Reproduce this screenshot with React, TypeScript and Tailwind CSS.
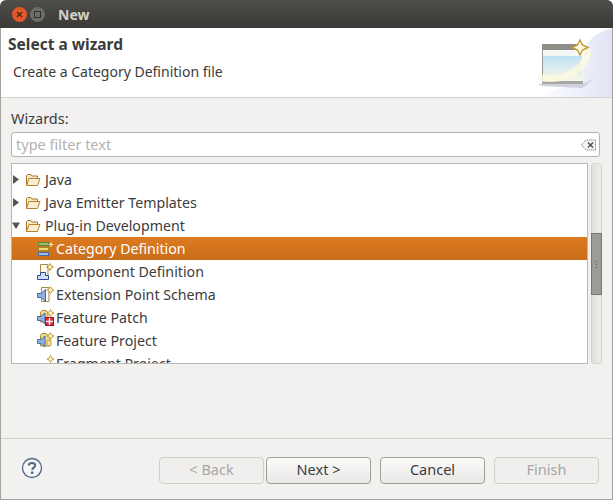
import React from 'react';

const fontStack = "font-['Noto_Sans','Open_Sans',sans-serif]";

// folder icon used for the tree categories
const FolderIcon = () => (
  <svg width="16" height="14" viewBox="0 0 16 14" className="shrink-0">
    <path d="M1.5 12.5V2.5L2.5 1.5H6L7 3H12.5V5" fill="#f6e7c4" stroke="#a9772c" strokeWidth="1" />
    <path d="M1.5 12.5L4 5.5H15L12.5 12.5Z" fill="#fbeed0" stroke="#b9822f" strokeWidth="1" strokeLinejoin="round" />
  </svg>
);

const Arrow = ({ open }: { open?: boolean }) => (
  <svg width="8" height="9" viewBox="0 0 8 9" className="shrink-0">
    {open ? <path d="M0 1.5H8L4 8Z" fill="#55534e" /> : <path d="M1 0L7 4.5L1 9Z" fill="#55534e" />}
  </svg>
);

const Sparkle = ({ x, y }: { x: number; y: number }) => (
  <path
    d={`M${x} ${y - 3.5}L${x + 1.2} ${y - 1.2}L${x + 3.5} ${y}L${x + 1.2} ${y + 1.2}L${x} ${y + 3.5}L${x - 1.2} ${y + 1.2}L${x - 3.5} ${y}L${x - 1.2} ${y - 1.2}Z`}
    fill="#fff6d0"
    stroke="#c19a35"
    strokeWidth="1"
  />
);

const CategoryIcon = () => (
  <svg width="18" height="16" viewBox="0 0 18 16" className="shrink-0">
    <rect x="1.5" y="1.5" width="10" height="3" fill="#9bbf6a" stroke="#5f7f3a" />
    <rect x="1.5" y="6.5" width="10" height="3" fill="#efd777" stroke="#a68a2c" />
    <rect x="1.5" y="11.5" width="10" height="3" fill="#9fbce4" stroke="#4a6aa5" />
    <path d="M14 1V6M11.5 3.5H16.5" stroke="#f4e6a8" strokeWidth="1.2" />
  </svg>
);

const ComponentIcon = () => (
  <svg width="18" height="18" viewBox="0 0 18 18" className="shrink-0">
    <path d="M3.5 1.5H11V15.5H3.5Z" fill="#fdfcf4" stroke="#a08a4a" />
    <path d="M0.5 16.5V12.5H3.5V9.5H8.5V12.5H11.5V16.5Z" fill="#d5def2" stroke="#2f4a9a" />
    <Sparkle x={13} y={4} />
  </svg>
);

const SchemaIcon = () => (
  <svg width="18" height="18" viewBox="0 0 18 18" className="shrink-0">
    <path d="M4.5 1.5H12V15.5H4.5Z" fill="#fdfcf4" stroke="#a08a4a" />
    <path d="M0.5 7.5L4 7.5L8.5 3.5V15.5L4 11.5H0.5Z" fill="#8fb0e0" stroke="#4a6aa5" />
    <Sparkle x={13.5} y={4} />
  </svg>
);

const PatchIcon = () => (
  <svg width="18" height="18" viewBox="0 0 18 18" className="shrink-0">
    <path d="M3.5 3.5L5 1.5H9L10 3H11V13H3.5Z" fill="#f1d98f" stroke="#a98a3a" />
    <path d="M0.5 7.5L4 7.5L8 4V15L4 11.5H0.5Z" fill="#8fb0e0" stroke="#4a6aa5" />
    <rect x="8.5" y="8.5" width="8" height="8" fill="#d8253a" stroke="#a01828" />
    <path d="M12.5 9V16M9 12.5H16" stroke="#fff" strokeWidth="1.4" />
    <Sparkle x={13.5} y={4} />
  </svg>
);

const ProjectIcon = () => (
  <svg width="18" height="18" viewBox="0 0 18 18" className="shrink-0">
    <path d="M3.5 3.5L5 1.5H9L10 3H13V14H3.5Z" fill="#f1d98f" stroke="#a98a3a" />
    <path d="M0.5 7.5L4 7.5L8 4V15L4 11.5H0.5Z" fill="#8fb0e0" stroke="#4a6aa5" />
    <path d="M10 8.5H14V13.5H10Z" fill="#f4e2a0" stroke="#c9a84a" />
    <Sparkle x={13.5} y={4} />
  </svg>
);

const FragmentIcon = () => (
  <svg width="18" height="18" viewBox="0 0 18 18" className="shrink-0">
    <Sparkle x={13.5} y={4} />
  </svg>
);

const WizardBanner = () => (
  <svg width="90" height="69" viewBox="0 0 90 69" className="shrink-0">
    <defs>
      <linearGradient id="glass" x1="0" y1="0" x2="0" y2="1">
        <stop offset="0" stopColor="#bfe2f6" />
        <stop offset="1" stopColor="#f8f6e4" />
      </linearGradient>
      <linearGradient id="wash" x1="0" y1="0" x2="1" y2="0">
        <stop offset="0" stopColor="#ffffff" />
        <stop offset="1" stopColor="#e0e5f5" />
      </linearGradient>
    </defs>
    <path d="M90 0C76 4 62 12 62 28C62 48 40 62 14 69H90Z" fill="url(#wash)" />
    <path d="M16 56H61L72 50C68 54 64 58 60 60L20 58Z" fill="#cfd1dc" />
    <rect x="20" y="16" width="41" height="40" fill="#f6f6f4" />
    <rect x="20" y="16" width="41" height="6" fill="#8f8f8a" />
    <rect x="21" y="28" width="39" height="24" fill="url(#glass)" />
    <rect x="20" y="53" width="41" height="3" fill="#a8a8a2" />
    <rect x="20" y="22" width="1" height="32" fill="#9a9a95" />
    <path d="M20 50C40 53 62 44 66 24" fill="none" stroke="#fdfae0" strokeWidth="7" strokeLinecap="round" opacity="0.75" />
    <path d="M58 12L60.5 17L66 19.5L60.5 22L58 27L55.5 22L50 19.5L55.5 17Z" fill="#fff8dc" stroke="#c19a35" strokeWidth="1.4" />
  </svg>
);

const FilterClearIcon = () => (
  <svg width="15" height="12" viewBox="0 0 15 12" className="shrink-0">
    <path d="M0.5 6L5 1H14.5V11H5Z" fill="#f4f4f2" stroke="#66645f" strokeDasharray="1 1" />
    <path d="M7 3.5L12 8.5M12 3.5L7 8.5" stroke="#55534e" strokeWidth="1.5" />
  </svg>
);

const HelpIcon = () => (
  <svg width="22" height="22" viewBox="0 0 22 22">
    <circle cx="11" cy="11" r="9.5" fill="#f6f6f5" stroke="#51658c" strokeWidth="1.3" />
    <path d="M7.8 8.6C7.8 6.8 9.2 5.9 11 5.9C12.9 5.9 14.2 6.9 14.2 8.5C14.2 10.6 11.2 10.6 11.2 13" fill="none" stroke="#51658c" strokeWidth="2" />
    <rect x="10" y="14.5" width="2.4" height="2.4" fill="#51658c" />
  </svg>
);

type TreeRow = { label: string; icon: React.ReactNode; selected?: boolean };

const categories = [
  { label: 'Java', open: false },
  { label: 'Java Emitter Templates', open: false },
  { label: 'Plug-in Development', open: true },
];

const rows: TreeRow[] = [
  { label: 'Category Definition', icon: <CategoryIcon />, selected: true },
  { label: 'Component Definition', icon: <ComponentIcon /> },
  { label: 'Extension Point Schema', icon: <SchemaIcon /> },
  { label: 'Feature Patch', icon: <PatchIcon /> },
  { label: 'Feature Project', icon: <ProjectIcon /> },
  { label: 'Fragment Project', icon: <FragmentIcon /> },
];

const WizardButton = ({ label, disabled }: { label: string; disabled?: boolean }) => (
  <button
    className={`h-[27px] w-[105px] rounded-[4px] border pb-[2px] text-[14.5px] ${
      disabled
        ? 'border-[#d0cec9] bg-[#f0efed] text-[#a8a6a2]'
        : 'border-[#a09e99] bg-gradient-to-b from-[#fbfbfa] to-[#e9e8e6] text-[#3c3c3c]'
    }`}
  >
    {label}
  </button>
);

export default function App() {
  return (
    <div className={`flex h-[500px] w-[613px] flex-col overflow-hidden rounded-t-[6px] bg-[#f2f1f0] text-[#3c3c3c] ${fontStack}`}>
      {/* Title bar */}
      <div className="flex h-[28px] shrink-0 items-center gap-[3px] bg-gradient-to-b from-[#4f4e49] to-[#3a3935] pl-[12px]">
        <div className="flex h-[15px] w-[15px] items-center justify-center rounded-full bg-[#e2582a]">
          <svg width="7" height="7" viewBox="0 0 7 7">
            <path d="M1 1L6 6M6 1L1 6" stroke="#4a2010" strokeWidth="1.3" />
          </svg>
        </div>
        <div className="flex h-[15px] w-[15px] items-center justify-center rounded-full bg-[#6d6c67]">
          <div className="h-[7px] w-[7px] border border-[#33322e]" />
        </div>
        <span className="ml-[10px] text-[14px] font-bold text-[#d5d2c9]">New</span>
      </div>

      <div className="flex min-h-0 flex-1 flex-col border-x border-b border-[#a5a39e]">
        {/* Header */}
        <div className="flex h-[69px] shrink-0 items-start justify-between bg-white">
          <div className="pl-[7px] pt-[7px]">
            <div className="text-[15.5px] leading-[19px] font-bold">Select a wizard</div>
            <div className="mt-[8px] pl-[5px] text-[14px] leading-[19px]">Create a Category Definition file</div>
          </div>
          <WizardBanner />
        </div>
        <div className="h-px shrink-0 bg-[#d3d1cd]" />

        {/* Wizards body */}
        <div className="flex min-h-0 flex-1 flex-col px-[10px]">
          <div className="mt-[11px] text-[14.5px] leading-[19px]">Wizards:</div>
          <div className="mt-[4px] flex h-[25px] w-[589px] shrink-0 items-center justify-between rounded-[3px] border border-[#b5b3ae] bg-white pl-[4px] pr-[3px]">
            <span className="text-[14.5px] text-[#b4b2ae]">type filter text</span>
            <FilterClearIcon />
          </div>
          <div className="mt-[6px] flex w-[591px] shrink-0 gap-[3px]">
            <div className="h-[201px] w-[578px] overflow-hidden border border-[#b9b7b2] bg-white pt-[4px]">
              {categories.map((c) => (
                <div key={c.label} className="flex h-[23px] items-center">
                  <Arrow open={c.open} />
                  <span className="ml-[5px]"><FolderIcon /></span>
                  <span className="ml-[4px] text-[14.2px] whitespace-nowrap">{c.label}</span>
                </div>
              ))}
              {rows.map((r) => (
                <div
                  key={r.label}
                  className={`flex h-[23px] items-center pl-[25px] ${
                    r.selected ? 'bg-gradient-to-b from-[#dd7a1f] to-[#c86e1c] text-white' : ''
                  }`}
                >
                  {r.icon}
                  <span className="ml-[1px] text-[14.2px] whitespace-nowrap">{r.label}</span>
                </div>
              ))}
            </div>
            <div className="flex h-[201px] w-[11px] flex-col rounded-[3px] border border-[#d5d3cf] bg-gradient-to-r from-[#dfdedb] to-[#efeeec] pt-[69px]">
              <div className="-mx-px flex h-[62px] shrink-0 flex-col items-center justify-center gap-[2px] border border-[#777672] bg-[#9c9b98]">
                <div className="h-px w-px bg-[#555]" />
                <div className="h-px w-px bg-[#555]" />
                <div className="h-px w-px bg-[#555]" />
              </div>
            </div>
          </div>
        </div>

        {/* Footer */}
        <div className="h-px shrink-0 bg-[#d3d1cd]" />
        <div className="flex h-[60px] shrink-0 items-start pr-[13px] pt-[18px]">
          <div className="ml-[20px]"><HelpIcon /></div>
          <div className="ml-auto flex">
            <WizardButton label="< Back" disabled />
            <div className="ml-[2px]"><WizardButton label="Next >" /></div>
            <div className="ml-[9px]"><WizardButton label="Cancel" /></div>
            <div className="ml-[9px]"><WizardButton label="Finish" disabled /></div>
          </div>
        </div>
      </div>
    </div>
  );
}
